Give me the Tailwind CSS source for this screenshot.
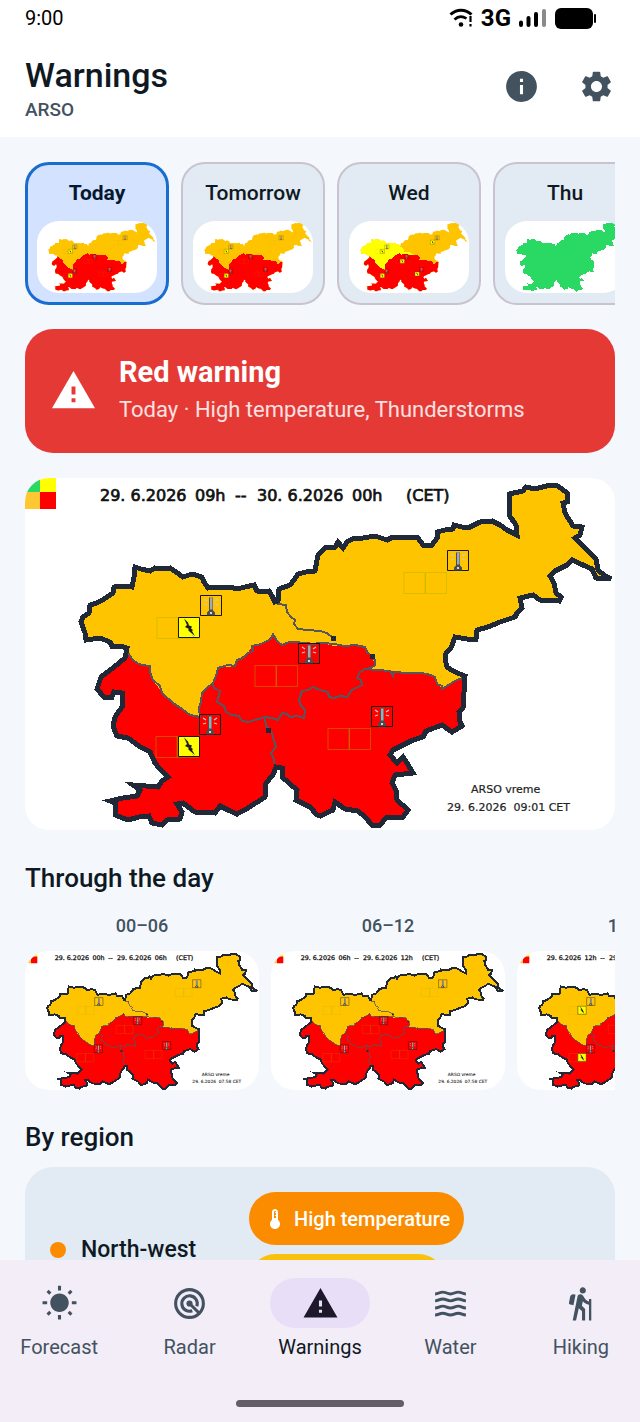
<!DOCTYPE html>
<html lang="en">
<head>
    <meta charset="UTF-8">
    <meta name="viewport" content="width=device-width, initial-scale=1.0">
    <title>Warnings</title>
    <script src="https://cdn.jsdelivr.net/npm/@tailwindcss/browser@4"></script>
</head>
<body class="h-screen flex flex-col overflow-hidden bg-[#f4f8fd] text-[#0f1923] font-[Roboto,sans-serif]">

    <!-- Shared map shapes -->
    <svg class="absolute w-0 h-0" aria-hidden="true">
        <defs>
            <path id="outline" d="M56 144L58 139L64 135L65 127L72 125L79 121L88 115L89 109L97 108L107 109L109 99L110 89L116 91L125 93L130 90L137 91L145 90L151 94L158 99L167 96L177 99L179 104L183 110L194 109L205 109L212 111L220 109L229 107L232 113L238 114L244 113L247 118L250 124L253 123L254 111L265 107L269 102L273 96L281 94L290 93L293 77L301 69L310 69L313 64L318 70L322 64L327 61L338 60L350 58L362 62L368 59L380 59L392 59L398 67L407 67L412 60L412 54L420 52L428 51L429 47L437 49L445 49L455 44L467 43L475 47L482 52L492 57L491 47L484 37L484 27L484 16L498 13L501 9L510 11L525 7L533 8L542 15L542 24L538 25L540 35L548 48L557 49L555 57L550 60L562 72L571 81L573 92L579 97L586 101L571 100L567 91L558 87L547 82L542 87L530 93L525 98L529 105L531 115L536 119L534 123L515 122L508 117L495 120L497 130L492 135L490 139L475 144L463 149L452 152L451 161L442 161L430 159L426 170L421 175L420 181L422 189L430 194L440 198L439 214L438 230L434 234L435 244L437 248L427 254L417 247L401 253L398 259L388 262L368 272L365 277L372 285L378 279L382 285L388 295L370 297L367 305L371 312L372 322L383 332L378 339L362 339L355 347L347 347L340 339L333 333L320 331L310 324L308 332L295 338L292 337L285 329L271 322L272 312L257 299L257 290L251 289L248 297L241 305L240 319L223 330L212 336L203 332L195 328L190 335L170 334L158 325L152 326L157 334L155 341L142 342L137 347L127 345L124 338L114 339L103 342L90 337L90 325L85 323L98 320L112 318L115 312L108 307L133 309L137 303L143 299L135 291L130 285L125 274L114 268L103 260L92 258L88 248L90 239L97 229L97 215L89 214L87 219L79 219L72 211L76 199L88 190L100 180L102 170L95 168L87 168L85 164L75 160L61 162L60 155Z"/>
            <clipPath id="country"><use href="#outline"/></clipPath>
            <path id="north-west" d="M0 0H250V124L252 126L261 127L262 134L270 142L273 151L295 153L308 160L347 178L200 260H0Z"/>
            <path id="south" d="M0 172H100L103 175L108 182L117 187L125 188L128 202L135 212L148 225L165 237L175 239L175 224L177 215L188 205L193 190L210 188L212 182L223 175L227 168L242 163L248 156L252 163L257 167L264 163L272 164L298 165L309 168L320 168L330 167L340 169L347 178L350 187L340 191L365 193L395 195L410 199L412 206L417 211L437 200H600V360H0Z"/>
            <g id="borders" fill="none" stroke="#55565e" stroke-width="2">
                <path d="M252 126L261 127L262 134L266 139L270 142L269 146L273 151L283 152L295 153L302 155L308 160"/>
                <path d="M103 175L108 182L112 185L117 187L125 188L125 195L128 202L135 208L137 215L148 225L157 231L165 237L175 239L174 230L176 224L177 215L183 209L188 205"/>
                <path d="M248 156L246 161L242 163L236 166L227 168L228 173L223 175L218 180L212 182L210 188L203 187L193 190L191 198L188 205L189 210L195 213L192 224L199 228L201 234L207 237L214 238L217 243L223 244L230 242L240 239L247 240L253 242L257 235L262 236L265 239L272 238L279 240L280 232L276 228L274 222L277 213L283 212L288 209L295 212L303 214L304 219L309 220L315 218L322 219L327 212L337 207L336 202L332 200L335 194L340 191L346 190L350 187L350 182L347 178L342 174L340 169L330 167L320 168L309 166L298 165L285 166L272 164L264 164L257 167L252 163Z"/>
                <path d="M340 191L352 192L365 193L368 198L369 194L382 195L395 195L403 196L410 199L412 206L417 208L417 211L430 203L437 200"/>
                <path d="M240 239L241 248L247 255L249 263L251 269L246 275L249 281L250 288"/>
                <path d="M306 158h4v4h-4zM345 176h4v4h-4zM241 250h4v4h-4z" fill="#1f2937" stroke="#1f2937" stroke-width="1"/>
            </g>
            <g id="thermo">
                <path d="M-43 22.500h21v21h-21zM-21.500 22.500h21v21h-21z" fill="none" stroke="#a0b400" stroke-opacity=".4"/>
                <path d="M.5.500h21v20h-21z" fill="none" stroke="#151515"/>
                <path d="M9 2.500h4v13l2 2v3H7v-3l2-2z" fill="#4b4d52"/>
                <path d="M10 2.500h2.500v12H10z" fill="#a5a9ad"/>
                <path d="M4 4l3 2M4 10l3-1M15 6l3-2M15 9l3 1" stroke="#cfc9bd" stroke-width="1.300"/>
                <path d="M10 17h2v2h-2z" fill="#d5d7d9"/>
            </g>
            <g id="bolt">
                <path d="M.5.500h21v20h-21z" fill="#ff0" stroke="#151515"/>
                <path d="M6 1.500l4 4 1 3 3 1-1 2 2 1.500-1 1 3 5-5-4-2-2 1-1-4-2 2-2z" fill="#1d2028"/>
                <path d="M14 18l2 2" stroke="#bbb"/>
            </g>
            <g id="markers">
                <use href="#thermo" x="175" y="117"/>
                <use href="#thermo" x="422" y="72"/>
                <use href="#thermo" x="273" y="165"/>
                <use href="#thermo" x="174" y="236"/>
                <use href="#thermo" x="346" y="228"/>
            </g>
            <g id="storms">
                <use href="#bolt" x="153" y="139"/>
                <use href="#bolt" x="153" y="258"/>
            </g>
            <g id="regions" clip-path="url(#country)">
                <path d="M0 0h590v352H0z" fill="#ffc400"/>
                <use href="#north-west" fill="currentColor"/>
                <use href="#south" fill="#f00"/>
            </g>
            <g id="legend">
                <path d="M0 0h15v14H0z" fill="#2ad964"/>
                <path d="M15 0h16v14H15z" fill="#ff0"/>
                <path d="M0 14h15v17H0z" fill="#ffc832"/>
                <path d="M15 14h16v17H15z" fill="#f00"/>
            </g>
            <g id="full-map">
                <use href="#legend"/>
                <g shape-rendering="crispEdges">
                    <use href="#regions"/>
                    <use href="#borders"/>
                    <use href="#outline" fill="none" stroke="#1f2937" stroke-width="5"/>
                </g>
                <use href="#markers"/>
            </g>
            <path id="i-warning" d="M1 21h22L12 2 1 21zm12-3h-2v-2h2v2zm0-4h-2v-4h2v4z"/>
            <path id="i-thermostat" d="M15 13V5c0-1.660-1.340-3-3-3S9 3.340 9 5v8c-1.210.91-2 2.370-2 4 0 2.760 2.240 5 5 5s5-2.240 5-5c0-1.630-.79-3.090-2-4zm-4-8c0-.55.45-1 1-1s1 .45 1 1h-1v1h1v2h-1v1h1v2h-2V5z"/>
        </defs>
    </svg>

    <header class="shrink-0 bg-white px-[25px] pb-4">
        <!-- Status bar -->
        <div class="flex items-center h-9 pr-[17px] text-black">
            <span class="text-[20px] leading-6">9:00</span>
            <div class="ml-auto flex items-center gap-2">
                <svg class="w-6 h-5" viewBox="0 0 24 20" fill="none" stroke="#000">
                    <path d="M1.500 6.500C7.500 .8 16.500 .8 22.500 6.500" stroke-width="3"/>
                    <path d="M5.500 11.500c3.500-3.500 8-3.600 12-1" stroke-width="2.600"/>
                    <circle cx="12" cy="16.500" r="2.300" fill="#000" stroke="none"/>
                    <path d="M21.500 8v6M21.500 16v2.500" stroke-width="2.200"/>
                </svg>
                <span class="text-[24px] leading-6 font-bold">3G</span>
                <svg class="w-7 h-5" viewBox="0 0 28 20" stroke-width="4" stroke-linecap="round">
                    <path d="M2 14.500V17M9.500 10v7M17 6v11" stroke="#000"/>
                    <path d="M25 3v14" stroke="#8a8a8a"/>
                </svg>
                <svg class="w-[43px] h-[21px]" viewBox="0 0 43 21">
                    <rect width="38" height="21" rx="6"/>
                    <rect x="39" y="6" width="2" height="9" rx="1"/>
                </svg>
            </div>
        </div>
        <!-- Title bar -->
        <div class="flex items-center pt-4">
            <div class="flex-1">
                <h1 class="text-[34px] leading-[46px] font-medium">Warnings</h1>
                <p class="text-[19px] leading-[23px] font-medium text-[#435260]">ARSO</p>
            </div>
            <div class="flex items-center gap-[38px] text-[#43525f]">
                <button aria-label="Information">
                    <svg class="w-[37px] h-[37px]" viewBox="0 0 24 24" fill="currentColor"><path d="M12 2C6.480 2 2 6.480 2 12s4.480 10 10 10 10-4.480 10-10S17.520 2 12 2zm1 15h-2v-6h2v6zm0-8h-2V7h2v2z"/></svg>
                </button>
                <button aria-label="Settings">
                    <svg class="w-[37px] h-[37px]" viewBox="0 0 24 24" fill="currentColor"><path d="M19.140 12.940c.04-.3.06-.61.06-.94 0-.32-.02-.64-.07-.94l2.030-1.580c.18-.14.23-.41.12-.61l-1.920-3.320c-.12-.22-.37-.29-.59-.22l-2.390.96c-.5-.38-1.030-.7-1.620-.94l-.36-2.540c-.04-.24-.24-.41-.48-.41h-3.840c-.24 0-.43.17-.47.41l-.36 2.540c-.59.24-1.130.57-1.620.94l-2.390-.96c-.22-.08-.47 0-.59.22L2.740 8.870c-.12.21-.08.47.12.61l2.030 1.580c-.05.3-.09.63-.09.94s.02.64.07.94l-2.030 1.580c-.18.14-.23.41-.12.61l1.920 3.320c.12.22.37.29.59.22l2.390-.96c.5.38 1.030.7 1.620.94l.36 2.540c.05.24.24.41.48.41h3.840c.24 0 .44-.17.47-.41l.36-2.540c.59-.24 1.130-.56 1.620-.94l2.390.96c.22.08.47 0 .59-.22l1.920-3.320c.12-.22.07-.47-.12-.61l-2.010-1.580zM12 15.600c-1.980 0-3.600-1.620-3.600-3.600s1.620-3.600 3.600-3.600 3.600 1.620 3.600 3.600-1.620 3.600-3.600 3.600z"/></svg>
                </button>
            </div>
        </div>
    </header>

    <main class="flex-1 min-h-0 overflow-hidden px-[25px] pt-[25px]">
        <!-- Day picker -->
        <div class="flex gap-3 overflow-hidden">
            <button class="shrink-0 w-36 p-[9px] rounded-3xl border-3 border-[#1a6dd0] bg-[#d3e3ff] text-[#06182f]">
                <span class="block text-[21px] leading-[38px] mb-[9px] font-bold">Today</span>
                <svg class="block w-full rounded-[22px] bg-white text-[#ffc400]" viewBox="0 0 590 352">
                    <use href="#regions" shape-rendering="crispEdges"/><use href="#markers"/><use href="#storms"/>
                </svg>
            </button>
            <button class="shrink-0 w-36 p-[10px] rounded-3xl border-2 border-[#c9c3cf] bg-[#e2eaf3]">
                <span class="block text-[21px] leading-[38px] mb-[9px] font-medium">Tomorrow</span>
                <svg class="block w-full rounded-[22px] bg-white text-[#ffc400]" viewBox="0 0 590 352">
                    <use href="#regions" shape-rendering="crispEdges"/><use href="#markers"/><use href="#storms"/>
                </svg>
            </button>
            <button class="shrink-0 w-36 p-[10px] rounded-3xl border-2 border-[#c9c3cf] bg-[#e2eaf3]">
                <span class="block text-[21px] leading-[38px] mb-[9px] font-medium">Wed</span>
                <svg class="block w-full rounded-[22px] bg-white text-[#ff0]" viewBox="0 0 590 352">
                    <use href="#regions" shape-rendering="crispEdges"/><use href="#markers"/><use href="#storms"/>
                    <use href="#bolt" x="400" y="94"/><use href="#bolt" x="251" y="187"/><use href="#bolt" x="324" y="250"/>
                </svg>
            </button>
            <button class="shrink-0 w-36 p-[10px] rounded-3xl border-2 border-[#c9c3cf] bg-[#e2eaf3]">
                <span class="block text-[21px] leading-[38px] mb-[9px] font-medium">Thu</span>
                <svg class="block w-full rounded-[22px] bg-white" viewBox="0 0 590 352">
                    <use href="#outline" fill="#2ad964" shape-rendering="crispEdges"/>
                </svg>
            </button>
        </div>

        <!-- Alert banner -->
        <section class="mt-6 flex items-center gap-[22px] rounded-[28px] bg-[#e53935] px-[25px] py-6 text-white">
            <svg class="shrink-0 w-[47px] h-[47px]" viewBox="0 0 24 24" fill="currentColor"><use href="#i-warning"/></svg>
            <div>
                <h2 class="text-[29px] leading-[38px] font-bold">Red warning</h2>
                <p class="text-[22px] leading-[38px] text-white/85">Today · High temperature, Thunderstorms</p>
            </div>
        </section>

        <!-- Current map -->
        <svg class="mt-[25px] block w-full rounded-3xl bg-white text-[#ffc400] font-['DejaVu_Sans',sans-serif]" viewBox="0 0 590 352" role="img" aria-label="Warnings map">
            <use href="#full-map"/>
            <use href="#storms"/>
            <g fill="#111" stroke="#111" stroke-width=".7" font-size="16">
                <text x="75" y="23">29. 6.2026</text>
                <text x="170" y="23">09h</text>
                <text x="210" y="23">--</text>
                <text x="232" y="23">30. 6.2026</text>
                <text x="327" y="23">00h</text>
                <text x="381" y="23">(CET)</text>
            </g>
            <g fill="#222" stroke="#222" stroke-width=".2" font-size="11">
                <text x="446" y="315">ARSO vreme</text>
                <text class="whitespace-pre" x="422" y="333">29. 6.2026  09:01 CET</text>
            </g>
        </svg>

        <h2 class="mt-[31px] text-[26px] leading-[34px] font-medium">Through the day</h2>
        <div class="mt-[17px] flex gap-3 overflow-hidden">
            <figure class="shrink-0 w-[234px]">
                <figcaption class="mb-[11px] text-center text-[18px] leading-7 font-medium text-[#435260]">00–06</figcaption>
                <svg class="block w-full rounded-3xl bg-white text-[#ffc400] font-['DejaVu_Sans',sans-serif]" viewBox="0 0 590 352">
                    <use href="#full-map"/>
                    <g fill="#111" stroke="#111" stroke-width=".7" font-size="16">
                        <text x="75" y="23">29. 6.2026</text>
                        <text x="170" y="23">00h</text>
                        <text x="210" y="23">--</text>
                        <text x="232" y="23">29. 6.2026</text>
                        <text x="327" y="23">06h</text>
                        <text x="381" y="23">(CET)</text>
                    </g>
                    <g fill="#222" stroke="#222" stroke-width=".2" font-size="11">
                        <text x="446" y="315">ARSO vreme</text>
                        <text class="whitespace-pre" x="422" y="333">29. 6.2026  07:58 CET</text>
                    </g>
                </svg>
            </figure>
            <figure class="shrink-0 w-[234px]">
                <figcaption class="mb-[11px] text-center text-[18px] leading-7 font-medium text-[#435260]">06–12</figcaption>
                <svg class="block w-full rounded-3xl bg-white text-[#ffc400] font-['DejaVu_Sans',sans-serif]" viewBox="0 0 590 352">
                    <use href="#full-map"/>
                    <g fill="#111" stroke="#111" stroke-width=".7" font-size="16">
                        <text x="75" y="23">29. 6.2026</text>
                        <text x="170" y="23">06h</text>
                        <text x="210" y="23">--</text>
                        <text x="232" y="23">29. 6.2026</text>
                        <text x="327" y="23">12h</text>
                        <text x="381" y="23">(CET)</text>
                    </g>
                    <g fill="#222" stroke="#222" stroke-width=".2" font-size="11">
                        <text x="446" y="315">ARSO vreme</text>
                        <text class="whitespace-pre" x="422" y="333">29. 6.2026  07:58 CET</text>
                    </g>
                </svg>
            </figure>
            <figure class="shrink-0 w-[234px]">
                <figcaption class="mb-[11px] text-center text-[18px] leading-7 font-medium text-[#435260]">12–18</figcaption>
                <svg class="block w-full rounded-3xl bg-white text-[#ffc400] font-['DejaVu_Sans',sans-serif]" viewBox="0 0 590 352">
                    <use href="#full-map"/>
                    <use href="#storms"/>
                    <g fill="#111" stroke="#111" stroke-width=".7" font-size="16">
                        <text x="75" y="23">29. 6.2026</text>
                        <text x="170" y="23">12h</text>
                        <text x="210" y="23">--</text>
                        <text x="232" y="23">29. 6.2026</text>
                    </g>
                </svg>
            </figure>
        </div>

        <h2 class="mt-[30px] text-[26px] leading-[34px] font-medium">By region</h2>
        <section class="mt-[13px] rounded-[28px] bg-[#e2eaf3] p-[25px]">
            <div class="flex items-center">
                <span class="w-4 h-4 rounded-full bg-[#fb8c00]"></span>
                <span class="ml-[15px] w-[168px] text-[23px] leading-8 font-medium">North-west</span>
                <div class="flex flex-col items-start gap-[9px]">
                    <span class="flex items-center gap-[7px] h-[53px] px-[14px] rounded-full bg-[#fb8c00] text-white text-[20px] font-medium">
                        <svg class="w-6 h-6" viewBox="0 0 24 24" fill="currentColor"><use href="#i-thermostat"/></svg>
                        High temperature
                    </span>
                    <span class="flex items-center gap-[7px] h-[53px] px-[14px] rounded-full bg-[#f9c10b] text-[#0f1923] text-[20px] font-medium">
                        <svg class="w-6 h-6" viewBox="0 0 24 24" fill="currentColor"><path d="M7 2v11h3v9l7-12h-4l4-8z"/></svg>
                        Thunderstorms
                    </span>
                </div>
            </div>
        </section>
    </main>

    <!-- Bottom navigation -->
    <nav class="shrink-0 bg-[#f3edf7] pt-[18px] pb-[15px]">
        <div class="flex gap-3 text-[20px] leading-[26px] text-[#435260]">
            <a href="#forecast" class="flex-1 basis-0 flex flex-col items-center gap-[6px]">
                <span class="flex items-center justify-center w-[100px] h-[50px] rounded-full">
                    <svg class="w-[37px] h-[37px]" viewBox="0 0 24 24" fill="currentColor"><path d="M6.760 4.840l-1.800-1.790-1.410 1.410 1.790 1.790 1.420-1.410zM4 10.500H1v2h3v-2zm9-9.950h-2V3.500h2V.55zm7.450 3.910l-1.410-1.410-1.790 1.790 1.410 1.410 1.790-1.790zm-3.210 13.700l1.790 1.800 1.410-1.410-1.800-1.790-1.400 1.400zM20 10.500v2h3v-2h-3zm-8-5c-3.310 0-6 2.690-6 6s2.690 6 6 6 6-2.690 6-6-2.690-6-6-6zm-1 16.950h2V19.500h-2v2.950zm-7.450-3.910l1.410 1.410 1.790-1.800-1.410-1.410-1.790 1.800z"/></svg>
                </span>
                Forecast
            </a>
            <a href="#radar" class="flex-1 basis-0 flex flex-col items-center gap-[6px]">
                <span class="flex items-center justify-center w-[100px] h-[50px] rounded-full">
                    <svg class="w-[37px] h-[37px]" viewBox="0 0 24 24" fill="none" stroke="currentColor" stroke-width="2">
                        <circle cx="12" cy="12" r="9"/>
                        <path d="M13.800 16.700A5 5 0 1 1 16.700 13.800"/>
                        <circle cx="12" cy="12" r="2" fill="currentColor" stroke="none"/>
                        <path d="M12 12l6.500 6.500"/>
                    </svg>
                </span>
                Radar
            </a>
            <a href="#warnings" aria-current="page" class="flex-1 basis-0 flex flex-col items-center gap-[6px] text-[#0f1923]">
                <span class="flex items-center justify-center w-[100px] h-[50px] rounded-full bg-[#e8def8] text-[#1d192b]">
                    <svg class="w-[37px] h-[37px]" viewBox="0 0 24 24" fill="currentColor"><use href="#i-warning"/></svg>
                </span>
                Warnings
            </a>
            <a href="#water" class="flex-1 basis-0 flex flex-col items-center gap-[6px]">
                <span class="flex items-center justify-center w-[100px] h-[50px] rounded-full">
                    <svg class="w-[37px] h-[37px]" viewBox="0 0 24 24" fill="none" stroke="currentColor" stroke-width="1.900">
                        <path d="M2 5.800c2.300 0 2.700-1.200 5-1.200s2.700 1.200 5 1.200 2.700-1.200 5-1.200 2.700 1.200 5 1.200M2 10.300c2.300 0 2.700-1.200 5-1.200s2.700 1.200 5 1.200 2.700-1.200 5-1.200 2.700 1.200 5 1.200M2 14.900c2.300 0 2.700-1.200 5-1.200s2.700 1.200 5 1.200 2.700-1.200 5-1.200 2.700 1.200 5 1.200M2 19.500c2.300 0 2.700-1.200 5-1.200s2.700 1.200 5 1.200 2.700-1.200 5-1.200 2.700 1.200 5 1.200"/>
                    </svg>
                </span>
                Water
            </a>
            <a href="#hiking" class="flex-1 basis-0 flex flex-col items-center gap-[6px]">
                <span class="flex items-center justify-center w-[100px] h-[50px] rounded-full">
                    <svg class="w-[37px] h-[37px]" viewBox="0 0 24 24" fill="currentColor"><path d="M13.500 5.500c1.100 0 2-.9 2-2s-.9-2-2-2-2 .9-2 2 .9 2 2 2zM17.500 10.780c-1.230-.37-2.220-1.170-2.800-2.180l-1-1.600c-.41-.65-1.110-1-1.840-1-.78 0-1.590.5-1.780 1.440S7 23 7 23h2.100l1.800-8 2.100 2v6h2v-7.500l-2.100-2 .6-3c1 1.150 2.410 2.010 4 2.340V23H19V9h-1.500v1.780zM7.430 13.130l-2.120-.41c-.54-.11-.9-.63-.79-1.170l.76-3.930c.21-1.080 1.260-1.790 2.340-1.580l1.160.23-1.350 6.860z"/></svg>
                </span>
                Hiking
            </a>
        </div>
        <div class="mx-auto mt-10 w-[168px] h-[7px] rounded-full bg-[#625f66]"></div>
    </nav>
</body>
</html>
